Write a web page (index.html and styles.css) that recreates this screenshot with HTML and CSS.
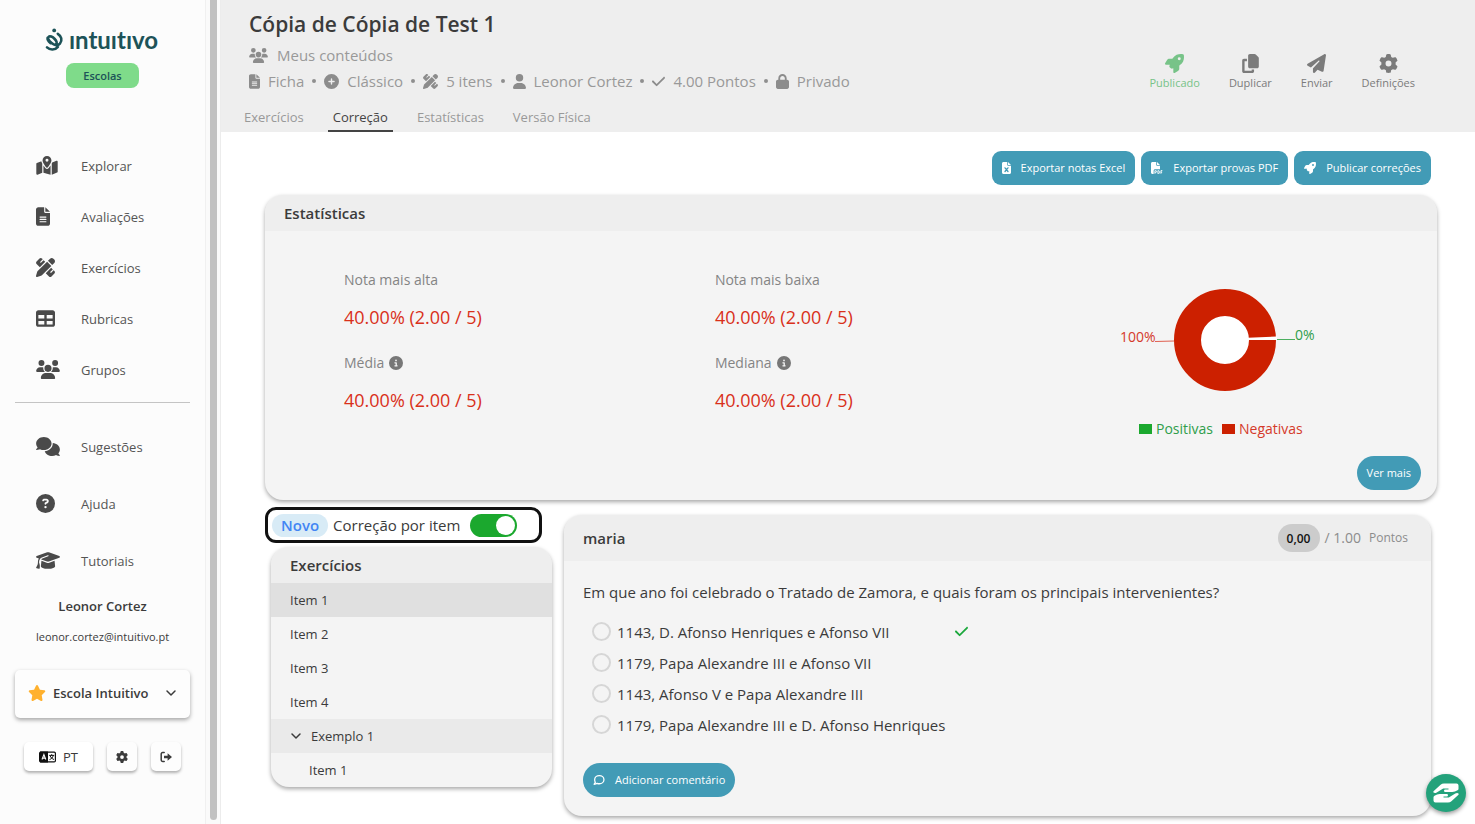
FILE: index.html
```html
<!DOCTYPE html>
<html lang="pt">
  <head>
    <meta charset="UTF-8" />
    <meta name="viewport" content="width=device-width, initial-scale=1.0" />
    <title>Cópia de Cópia de Test 1 - Intuitivo</title>
    <link rel="stylesheet" href="styles.css">
  </head>
  <body>
    <!-- Icon sprite -->
    <svg class="sprite" aria-hidden="true">
      <symbol id="i-map" viewBox="0 0 576 512"><path d="M408 120c0 54.6-73.1 151.9-105.2 192c-7.7 9.6-22 9.6-29.6 0C241.1 271.9 168 174.6 168 120C168 53.7 221.7 0 288 0s120 53.7 120 120zm8 80.4c3.5-6.9 6.7-13.8 9.6-20.6c.5-1.2 1-2.5 1.5-3.7l116-46.4C558.9 123.4 576 135 576 152V422.8c0 9.8-6 18.6-15.1 22.3L416 503V200.4zM137.6 138.3c2.4 14.1 7.2 28.3 12.8 41.5c2.9 6.8 6.1 13.7 9.6 20.6V451.8L32.9 502.7C17.1 509 0 497.4 0 480.4V209.6c0-9.8 6-18.6 15.1-22.3l122.6-49zM327.8 332c13.9-17.4 35.7-45.7 56.2-77V504.3L192 449.4V255c20.5 31.3 42.3 59.6 56.2 77c20.5 25.6 59.1 25.6 79.6 0zM288 152a40 40 0 1 0 0-80 40 40 0 1 0 0 80z"/></symbol>
      <symbol id="i-file" viewBox="0 0 384 512"><path d="M64 0C28.7 0 0 28.7 0 64V448c0 35.3 28.7 64 64 64H320c35.3 0 64-28.7 64-64V160H256c-17.7 0-32-14.3-32-32V0H64zM256 0V128H384L256 0zM112 256H272c8.8 0 16 7.2 16 16s-7.2 16-16 16H112c-8.8 0-16-7.2-16-16s7.2-16 16-16zm0 64H272c8.8 0 16 7.2 16 16s-7.2 16-16 16H112c-8.8 0-16-7.2-16-16s7.2-16 16-16zm0 64H272c8.8 0 16 7.2 16 16s-7.2 16-16 16H112c-8.8 0-16-7.2-16-16s7.2-16 16-16z"/></symbol>
      <symbol id="i-pen-ruler" viewBox="0 0 512 512"><path d="M469.3 19.3l23.4 23.4c25 25 25 65.5 0 90.5l-56.4 56.4L322.3 75.7l56.4-56.4c25-25 65.5-25 90.5 0zM44.9 353.2L299.7 98.3 413.7 212.3 158.8 467.1c-6.7 6.7-15.1 11.6-24.2 14.2l-104 29.7c-8.4 2.4-17.4 .1-23.6-6.1s-8.5-15.2-6.1-23.6l29.7-104c2.6-9.2 7.5-17.5 14.2-24.2zM249.4 103.4L103.4 249.4 16 161.9c-18.7-18.7-18.7-49.1 0-67.9L94.1 16c18.7-18.7 49.1-18.7 67.9 0l19.8 19.8c-.3 .3-.7 .6-1 .9l-64 64c-6.2 6.2-6.2 16.4 0 22.6s16.4 6.2 22.6 0l64-64c.3-.3 .6-.7 .9-1l45.1 45.1zM408.6 262.6l45.1 45.1c-.3 .3-.7 .6-1 .9l-64 64c-6.2 6.2-6.2 16.4 0 22.6s16.4 6.2 22.6 0l64-64c.3-.3 .6-.7 .9-1L496 350.1c18.7 18.7 18.7 49.1 0 67.9L417.9 496c-18.7 18.7-49.1 18.7-67.9 0l-87.4-87.4L408.6 262.6z"/></symbol>
      <symbol id="i-table" viewBox="0 0 512 512"><path d="M64 256V160H224v96H64zm0 64H224v96H64V320zm224 96V320H448v96H288zM448 256H288V160H448v96zM64 32C28.7 32 0 60.7 0 96V416c0 35.3 28.7 64 64 64H448c35.3 0 64-28.7 64-64V96c0-35.3-28.7-64-64-64H64z"/></symbol>
      <symbol id="i-users" viewBox="0 0 640 512"><path d="M144 0a80 80 0 1 1 0 160A80 80 0 1 1 144 0zM512 0a80 80 0 1 1 0 160A80 80 0 1 1 512 0zM0 298.7C0 239.8 47.8 192 106.7 192h42.7c15.9 0 31 3.5 44.6 9.7c-1.3 7.2-1.9 14.7-1.9 22.3c0 38.2 16.8 72.5 43.3 96c-.2 0-.4 0-.7 0H21.3C9.6 320 0 310.4 0 298.7zM405.3 320c-.2 0-.4 0-.7 0c26.6-23.5 43.3-57.8 43.3-96c0-7.6-.7-15-1.9-22.3c13.6-6.3 28.7-9.7 44.6-9.7h42.7C592.2 192 640 239.8 640 298.7c0 11.8-9.6 21.3-21.3 21.3H405.3zM224 224a96 96 0 1 1 192 0 96 96 0 1 1 -192 0zM128 485.3C128 411.7 187.7 352 261.3 352H378.7C452.3 352 512 411.7 512 485.3c0 14.7-11.9 26.7-26.7 26.7H154.7c-14.7 0-26.7-11.9-26.7-26.7z"/></symbol>
      <symbol id="i-comments" viewBox="0 0 640 512"><path d="M208 352c114.9 0 208-78.8 208-176S322.9 0 208 0S0 78.8 0 176c0 38.6 14.7 74.3 39.6 103.4c-3.5 9.4-8.7 17.7-14.2 24.7c-4.8 6.2-9.7 11-13.3 14.3c-1.8 1.6-3.3 2.9-4.3 3.7c-.5 .4-.9 .7-1.1 .8l-.2 .2C1 327.2-1.4 334.4 .8 340.9S9.1 352 16 352c21.8 0 43.8-5.6 62.1-12.5c9.2-3.5 17.8-7.4 25.2-11.4C134.1 343.3 169.8 352 208 352zM448 176c0 112.3-99.1 196.9-216.5 207C255.8 457.4 336.4 512 432 512c38.2 0 73.9-8.7 104.7-23.9c7.5 4 16 7.9 25.2 11.4c18.3 6.9 40.3 12.5 62.1 12.5c6.9 0 13.1-4.5 15.2-11.1c2.1-6.6-.2-13.8-5.8-17.9l-.2-.2c-.2-.2-.6-.4-1.1-.8c-1-.8-2.5-2-4.3-3.7c-3.6-3.3-8.5-8.1-13.3-14.3c-5.5-7-10.7-15.4-14.2-24.7c24.9-29 39.6-64.7 39.6-103.4c0-92.8-84.9-168.9-192.6-175.5c.4 5.1 .6 10.3 .6 15.5z"/></symbol>
      <symbol id="i-question" viewBox="0 0 512 512"><path d="M256 512A256 256 0 1 0 256 0a256 256 0 1 0 0 512zM169.8 165.3c7.9-22.3 29.1-37.3 52.8-37.3h58.3c34.9 0 63.1 28.3 63.1 63.1c0 22.6-12.1 43.5-31.7 54.8L280 264.4c-.2 13-10.9 23.6-24 23.6c-13.3 0-24-10.7-24-24V250.5c0-8.6 4.6-16.5 12.1-20.8l44.3-25.4c4.7-2.7 7.6-7.7 7.6-13.1c0-8.4-6.8-15.1-15.1-15.1H222.6c-3.4 0-6.4 2.1-7.5 5.3l-.4 1.2c-4.4 12.5-18.2 19-30.6 14.6s-19-18.2-14.6-30.6l.4-1.2zM224 352a32 32 0 1 1 64 0 32 32 0 1 1 -64 0z"/></symbol>
      <symbol id="i-cap" viewBox="0 0 640 512"><path d="M320 32c-8.1 0-16.1 1.4-23.7 4.1L15.8 137.4C6.3 140.9 0 149.9 0 160s6.3 19.1 15.8 22.6l57.9 20.9C57.3 229.3 48 259.8 48 291.9v28.1c0 28.4-10.8 57.7-22.3 80.8c-6.5 13-13.9 25.8-22.5 37.6C0 442.7-.9 448.3 .9 453.4s6 8.9 11.2 10.2l64 16c4.2 1.1 8.7 .3 12.4-2s6.3-6.1 7.1-10.4c8.6-42.8 4.3-81.2-2.1-108.7C90.3 344.3 86 329.8 80 316.5V291.9c0-30.2 10.2-58.7 27.9-81.5c12.9-15.5 29.6-28 49.2-35.7l157-61.7c8.2-3.2 17.5 .8 20.7 9s-.8 17.5-9 20.7l-157 61.7c-12.4 4.9-23.3 12.4-32.2 21.6l159.6 57.6c7.6 2.7 15.6 4.1 23.7 4.1s16.1-1.4 23.7-4.1L624.2 182.6c9.5-3.4 15.8-12.5 15.8-22.6s-6.3-19.1-15.8-22.6L343.7 36.1C336.1 33.4 328.1 32 320 32zM128 408c0 35.3 86 72 192 72s192-36.7 192-72L496.7 262.6 354.5 314c-11.1 4-22.8 6-34.5 6s-23.5-2-34.5-6L143.3 262.6 128 408z"/></symbol>
      <symbol id="i-star" viewBox="0 0 576 512"><path d="M316.9 18C311.6 7 300.4 0 288.1 0s-23.4 7-28.8 18L195 150.3 51.4 171.5c-12 1.8-22 10.2-25.7 21.7s-.7 24.2 7.9 32.7L137.8 329 113.2 474.7c-2 12 3 24.2 12.9 31.3s23 8 33.8 2.3l128.3-68.5 128.3 68.5c10.8 5.7 23.9 4.9 33.8-2.3s14.9-19.3 12.9-31.3L438.5 329 542.7 225.9c8.6-8.5 11.7-21.2 7.9-32.7s-13.7-19.9-25.7-21.7L381.2 150.3 316.9 18z"/></symbol>
      <symbol id="i-gear" viewBox="0 0 512 512"><path d="M495.9 166.6c3.2 8.7 .5 18.4-6.4 24.6l-43.3 39.4c1.1 8.3 1.7 16.8 1.7 25.4s-.6 17.1-1.7 25.4l43.3 39.4c6.9 6.2 9.6 15.9 6.4 24.6c-4.4 11.9-9.7 23.3-15.8 34.3l-4.7 8.1c-6.6 11-14 21.4-22.1 31.2c-5.9 7.2-15.7 9.6-24.5 6.8l-55.7-17.7c-13.4 10.3-28.2 18.9-44 25.4l-12.5 57.1c-2 9.1-9 16.3-18.2 17.8c-13.8 2.3-28 3.5-42.5 3.5s-28.7-1.2-42.5-3.5c-9.2-1.5-16.2-8.7-18.2-17.8l-12.5-57.1c-15.8-6.5-30.6-15.1-44-25.4L83.1 425.9c-8.8 2.8-18.6 .3-24.5-6.8c-8.1-9.8-15.5-20.2-22.1-31.2l-4.7-8.1c-6.1-11-11.4-22.4-15.8-34.3c-3.2-8.7-.5-18.4 6.4-24.6l43.3-39.4C64.6 273.1 64 264.6 64 256s.6-17.1 1.7-25.4L22.4 191.2c-6.9-6.2-9.6-15.9-6.4-24.6c4.4-11.9 9.7-23.3 15.8-34.3l4.7-8.1c6.6-11 14-21.4 22.1-31.2c5.9-7.2 15.7-9.6 24.5-6.8l55.7 17.7c13.4-10.3 28.2-18.9 44-25.4l12.5-57.1c2-9.1 9-16.3 18.2-17.8C227.3 1.2 241.5 0 256 0s28.7 1.2 42.5 3.5c9.2 1.5 16.2 8.7 18.2 17.8l12.5 57.1c15.8 6.5 30.6 15.1 44 25.4l55.7-17.7c8.8-2.8 18.6-.3 24.5 6.8c8.1 9.8 15.5 20.2 22.1 31.2l4.7 8.1c6.1 11 11.4 22.4 15.8 34.3zM256 336a80 80 0 1 0 0-160 80 80 0 1 0 0 160z"/></symbol>
      <symbol id="i-plus" viewBox="0 0 512 512"><path d="M256 512A256 256 0 1 0 256 0a256 256 0 1 0 0 512zM232 344V280H168c-13.3 0-24-10.7-24-24s10.7-24 24-24h64V168c0-13.3 10.7-24 24-24s24 10.7 24 24v64h64c13.3 0 24 10.7 24 24s-10.7 24-24 24H280v64c0 13.3-10.7 24-24 24s-24-10.7-24-24z"/></symbol>
      <symbol id="i-user" viewBox="0 0 448 512"><path d="M224 256A128 128 0 1 0 224 0a128 128 0 1 0 0 256zm-45.7 48C79.8 304 0 383.8 0 482.3C0 498.7 13.3 512 29.7 512H418.3c16.4 0 29.7-13.3 29.7-29.7C448 383.8 368.2 304 269.7 304H178.3z"/></symbol>
      <symbol id="i-check" viewBox="0 0 448 512"><path d="M438.6 105.4c12.5 12.5 12.5 32.8 0 45.3l-256 256c-12.5 12.5-32.8 12.5-45.3 0l-128-128c-12.5-12.5-12.5-32.8 0-45.3s32.8-12.5 45.3 0L160 338.7 393.4 105.4c12.5-12.5 32.8-12.5 45.3 0z"/></symbol>
      <symbol id="i-lock" viewBox="0 0 448 512"><path d="M144 144v48H304V144c0-44.2-35.8-80-80-80s-80 35.8-80 80zM80 192V144C80 64.5 144.5 0 224 0s144 64.5 144 144v48h16c35.3 0 64 28.7 64 64V448c0 35.3-28.7 64-64 64H64c-35.3 0-64-28.7-64-64V256c0-35.3 28.7-64 64-64H80z"/></symbol>
      <symbol id="i-rocket" viewBox="0 0 512 512"><path d="M156.6 384.9L125.7 354c-8.5-8.5-11.5-20.8-7.7-32.2c3-8.900 7-20.500 11.800-33.800L24 288c-8.600 0-16.600-4.600-20.900-12.100s-4.200-16.700 .2-24.100l52.500-88.500c13-21.900 36.500-35.300 61.900-35.300l82.300 0c2.400-4 4.800-7.700 7.200-11.300C289.100-4.100 411.100-8.100 483.900 5.300c11.600 2.100 20.600 11.200 22.800 22.800c13.400 72.900 9.300 194.800-111.400 276.700c-3.500 2.400-7.300 4.800-11.300 7.200v82.300c0 25.400-13.400 49-35.300 61.900l-88.500 52.500c-7.400 4.400-16.600 4.500-24.100 .2s-12.100-12.200-12.100-20.900V380.800c-14.100 4.900-26.400 8.900-35.700 11.900c-11.200 3.600-23.400 .5-31.800-7.800zM384 168a40 40 0 1 0 0-80 40 40 0 1 0 0 80z"/></symbol>
      <symbol id="i-copy" viewBox="0 0 448 512"><path d="M208 0H332.1c12.7 0 24.9 5.1 33.9 14.1l67.9 67.9c9 9 14.1 21.2 14.1 33.9V336c0 26.5-21.5 48-48 48H208c-26.5 0-48-21.5-48-48V48c0-26.5 21.5-48 48-48zM48 128h80v64H64V448H256V416h64v48c0 26.5-21.5 48-48 48H48c-26.5 0-48-21.5-48-48V176c0-26.5 21.5-48 48-48z"/></symbol>
      <symbol id="i-plane" viewBox="0 0 512 512"><path d="M498.1 5.6c10.1 7 15.4 19.1 13.5 31.2l-64 416c-1.5 9.7-7.4 18.2-16 23s-18.9 5.4-28 1.6L284 427.7l-68.5 74.1c-8.9 9.7-22.9 12.9-35.2 8.1S160 493.2 160 480V396.4c0-4 1.5-7.8 4.2-10.7L331.8 202.8c5.8-6.3 5.6-16-.4-22s-15.7-6.4-22-.7L106 360.8 17.7 316.6C7.1 311.3 .3 300.7 0 288.9s5.9-22.8 16.1-28.7l448-256c10.7-6.1 23.9-5.5 34 1.4z"/></symbol>
      <symbol id="i-info" viewBox="0 0 512 512"><path d="M256 512A256 256 0 1 0 256 0a256 256 0 1 0 0 512zM216 336h24V272H216c-13.3 0-24-10.7-24-24s10.7-24 24-24h48c13.3 0 24 10.7 24 24v88h8c13.3 0 24 10.7 24 24s-10.7 24-24 24H216c-13.3 0-24-10.7-24-24s10.7-24 24-24zm40-208a32 32 0 1 1 0 64 32 32 0 1 1 0-64z"/></symbol>
      <symbol id="i-excel" viewBox="0 0 384 512"><path d="M64 0C28.7 0 0 28.7 0 64V448c0 35.3 28.7 64 64 64H320c35.3 0 64-28.7 64-64V160H256c-17.7 0-32-14.3-32-32V0H64zM256 0V128H384L256 0z"/><path d="M128 250l128 156M256 250L128 406" fill="none" stroke="#429bb6" stroke-width="56" stroke-linecap="round"/></symbol>
      <symbol id="i-pdf" viewBox="0 0 512 512"><path d="M0 64C0 28.7 28.7 0 64 0H224V128c0 17.7 14.3 32 32 32H384V304H176c-35.3 0-64 28.7-64 64V512H64c-35.3 0-64-28.7-64-64V64zm384 64H256V0L384 128z"/><path d="M168 500v-132h32a36 36 0 0 1 0 76h-32M296 368h24c22 0 36 16 36 38v56c0 22-14 38-36 38h-24zM424 500v-132h60M424 436h50" fill="none" stroke="currentColor" stroke-width="40"/></symbol>
      <symbol id="i-comment" viewBox="0 0 16 16"><path d="M8.400 2.200c3.500 0 6.200 2.400 6.200 5.400s-2.700 5.400-6.200 5.400c-1 0-2-.2-2.900-.6-1 .8-2.400 1.300-4 1.300.8-.8 1.400-1.700 1.600-2.700C2.500 10 2.200 8.800 2.200 7.600c0-3 2.700-5.400 6.200-5.400z" fill="none" stroke="currentColor" stroke-width="1.700" stroke-linejoin="round"/></symbol>
      <symbol id="i-chevron" viewBox="0 0 12 12"><path d="M2 4l4 4 4-4" fill="none" stroke="currentColor" stroke-width="1.500" stroke-linecap="round" stroke-linejoin="round"/></symbol>
      <symbol id="i-logout" viewBox="0 0 12 12"><path d="M4.200 1.500H2.600A1.400 1.400 0 0 0 1.200 2.900v6.200a1.400 1.400 0 0 0 1.400 1.400h1.600" fill="none" stroke="currentColor" stroke-width="1.500" stroke-linecap="round"/><path d="M7.600 2.300L12 6 7.600 9.700V7.200H4V4.800h3.600z"/></symbol>
      <symbol id="i-language" viewBox="0 0 17 12"><rect x=".6" y="1.100" width="15.800" height="9.800" rx="1.200" fill="#fff" stroke="currentColor" stroke-width="1.200"/><path d="M1 .5h8v11H1z"/><path d="M3 8.500L4.900 3.600l1.900 4.900M3.600 7.100h2.600" fill="none" stroke="#fff" stroke-width="1.100"/><path d="M10.200 4.400h5M12.700 3.200v1.200M14.200 4.600c-.4 1.800-1.800 3.300-3.700 4M11.200 5c.7 1.600 1.900 2.800 3.800 3.500" fill="none" stroke="currentColor" stroke-width="1"/></symbol>
      <symbol id="i-hands" viewBox="0 0 28 22"><path d="M1.500 9.200L8.600 2.800Q10 1.500 12 1.500h12.500a2 2 0 0 1 2 2v3.200q0 1-1 1.500-2.600 1.800-5.200 1.800h-7.100a1.200 1.200 0 0 1 0-2.400h3.300V6.500h-5.300L4.700 10.400C2.800 11.600.6 10.600 1.500 9.200z"/><path d="M26.500 12.800l-7.100 6.400Q18 20.500 16 20.500H3.500a2 2 0 0 1-2-2v-3.200q0-1 1-1.500 2.600-1.800 5.200-1.800h7.100a1.200 1.200 0 0 1 0 2.400h-3.300v1.100h5.300l6.500-3.900c1.900-1.200 4.100-.2 3.200 1.200z"/></symbol>
    </svg>

    <div class="app">
      <aside class="sidebar">
        <a class="logo" href="#" aria-label="Intuitivo">
          <svg class="logo-mark" viewBox="0 0 20 26">
            <circle cx="9.200" cy="3.400" r="1.900" />
            <path d="M12.800 6.800c3.600 2.200 4.900 6.500 2.100 9.900-2 2.300-5.800 1.600-8.300-.6-2.600-2.200-4.400-4.700-3.100-6.100 1.300-1.500 4.100-.3 6.200 2 2 2.200 2.600 4.300 1.500 5.200M5.600 16.200c-1.500-1.200-3.400-3.700-3-5.400M2 20.400c3 2.900 7.900 2.900 10.900-.6" />
          </svg>
          <span class="logo-name">ıntuıtıvo</span>
        </a>
        <span class="plan">Escolas</span>

        <nav class="menu">
          <a href="#"><svg class="w22"><use href="#i-map"/></svg>Explorar</a>
          <a href="#"><svg class="w14"><use href="#i-file"/></svg>Avaliações</a>
          <a href="#"><svg class="w19"><use href="#i-pen-ruler"/></svg>Exercícios</a>
          <a href="#"><svg class="w19"><use href="#i-table"/></svg>Rubricas</a>
          <a href="#"><svg class="w24"><use href="#i-users"/></svg>Grupos</a>
        </nav>
        <hr>
        <nav class="menu menu-help">
          <a href="#"><svg class="w24"><use href="#i-comments"/></svg>Sugestões</a>
          <a href="#"><svg class="w19"><use href="#i-question"/></svg>Ajuda</a>
          <a href="#"><svg class="w24"><use href="#i-cap"/></svg>Tutoriais</a>
        </nav>

        <p class="user-name">Leonor Cortez</p>
        <p class="user-email">leonor.cortez@intuitivo.pt</p>

        <label class="school">
          <svg class="star"><use href="#i-star"/></svg>
          <select aria-label="Escola">
            <option>Escola Intuitivo</option>
          </select>
          <svg class="chevron"><use href="#i-chevron"/></svg>
        </label>

        <div class="tools">
          <button class="tool tool-lang"><svg><use href="#i-language"/></svg>PT</button>
          <button class="tool" aria-label="Definições da conta"><svg><use href="#i-gear"/></svg></button>
          <button class="tool" aria-label="Sair"><svg><use href="#i-logout"/></svg></button>
        </div>
      </aside>
      <div class="scrollbar"><div class="thumb"></div></div>

      <main>
        <header>
          <div class="heading">
            <h1>Cópia de Cópia de Test 1</h1>
            <p class="folder"><svg><use href="#i-users"/></svg>Meus conteúdos</p>
            <ul class="meta">
              <li><svg class="w11"><use href="#i-file"/></svg>Ficha</li>
              <li><svg class="w15"><use href="#i-plus"/></svg>Clássico</li>
              <li><svg class="w15"><use href="#i-pen-ruler"/></svg>5 itens</li>
              <li><svg class="w13"><use href="#i-user"/></svg>Leonor Cortez</li>
              <li><svg class="w13"><use href="#i-check"/></svg>4.00 Pontos</li>
              <li><svg class="w13"><use href="#i-lock"/></svg>Privado</li>
            </ul>
            <nav class="tabs">
              <a href="#">Exercícios</a>
              <a href="#" class="active">Correção</a>
              <a href="#">Estatísticas</a>
              <a href="#">Versão Física</a>
            </nav>
          </div>
          <div class="actions">
            <button class="published"><svg><use href="#i-rocket"/></svg>Publicado</button>
            <button><svg><use href="#i-copy"/></svg>Duplicar</button>
            <button><svg><use href="#i-plane"/></svg>Enviar</button>
            <button><svg><use href="#i-gear"/></svg>Definições</button>
          </div>
        </header>

        <div class="content">
          <div class="exports">
            <button class="btn"><svg class="w9"><use href="#i-excel"/></svg>Exportar notas Excel</button>
            <button class="btn"><svg class="w12"><use href="#i-pdf"/></svg>Exportar provas PDF</button>
            <button class="btn"><svg class="w12"><use href="#i-rocket"/></svg>Publicar correções</button>
          </div>

          <section class="card stats">
            <h2>Estatísticas</h2>
            <div class="stats-body">
              <dl>
                <dt>Nota mais alta</dt>
                <dd>40.00% (2.00 / 5)</dd>
                <dt>Média <svg><use href="#i-info"/></svg></dt>
                <dd>40.00% (2.00 / 5)</dd>
              </dl>
              <dl>
                <dt>Nota mais baixa</dt>
                <dd>40.00% (2.00 / 5)</dd>
                <dt>Mediana <svg><use href="#i-info"/></svg></dt>
                <dd>40.00% (2.00 / 5)</dd>
              </dl>
              <div class="chart">
                <svg class="donut" viewBox="0 0 210 120" role="img" aria-label="100% negativas, 0% positivas">
                  <circle cx="105" cy="60" r="24" fill="#fff" />
                  <circle cx="105" cy="60" r="37.500" fill="none" stroke="#cc2000" stroke-width="27" />
                  <path d="M128 57.800l29-1.300v3.500h-29z" fill="#fff" />
                  <path d="M35 61.500l19-.5" stroke="#e06050" />
                  <path d="M157 59.500h18" stroke="#4caf60" />
                  <text class="neg" x="0" y="62">100%</text>
                  <text class="pos" x="175" y="60">0%</text>
                </svg>
                <ul class="legend">
                  <li class="pos">Positivas</li>
                  <li class="neg">Negativas</li>
                </ul>
              </div>
            </div>
            <div class="stats-footer">
              <button class="btn btn-pill">Ver mais</button>
            </div>
          </section>

          <div class="correction">
            <div class="side">
              <label class="by-item">
                <span class="new">Novo</span>
                Correção por item
                <input type="checkbox" checked>
              </label>

              <section class="card exercises">
                <h2>Exercícios</h2>
                <a href="#" class="selected">Item 1</a>
                <a href="#">Item 2</a>
                <a href="#">Item 3</a>
                <a href="#">Item 4</a>
                <a href="#" class="group"><svg><use href="#i-chevron"/></svg>Exemplo 1</a>
                <a href="#" class="child">Item 1</a>
              </section>
            </div>

            <section class="card question">
              <div class="question-header">
                <h2>maria</h2>
                <div class="score">
                  <input type="text" value="0,00" aria-label="Pontos obtidos">
                  <span class="max">/ 1.00</span>
                  <span class="unit">Pontos</span>
                </div>
              </div>
              <div class="question-body">
                <p>Em que ano foi celebrado o Tratado de Zamora, e quais foram os principais intervenientes?</p>
                <div class="options">
                  <label><input type="radio" name="answer">1143, D. Afonso Henriques e Afonso VII <svg><use href="#i-check"/></svg></label>
                  <label><input type="radio" name="answer">1179, Papa Alexandre III e Afonso VII</label>
                  <label><input type="radio" name="answer">1143, Afonso V e Papa Alexandre III</label>
                  <label><input type="radio" name="answer">1179, Papa Alexandre III e D. Afonso Henriques</label>
                </div>
                <button class="btn btn-pill"><svg class="w12"><use href="#i-comment"/></svg>Adicionar comentário</button>
              </div>
            </section>
          </div>
        </div>
      </main>
    </div>

    <button class="support" aria-label="Suporte"><svg><use href="#i-hands"/></svg></button>
  </body>
</html>
```
FILE: styles.css
```css
* {
  box-sizing: border-box;
}

body {
  margin: 0;
  font-family: "Open Sans", "Noto Sans", sans-serif;
  font-size: 13px;
  line-height: 20px;
  color: #3b3b3b;
  background: #fff;
}

h1, h2, p, ul, dl, dd {
  margin: 0;
  padding: 0;
}

ul {
  list-style: none;
}

a {
  color: inherit;
  text-decoration: none;
}

button, input, select {
  font: inherit;
  color: inherit;
}

button {
  border: none;
  padding: 0;
  background: none;
  cursor: pointer;
}

svg {
  fill: currentColor;
  flex: none;
}

.sprite {
  display: none;
}

.w9 { width: 9px; }
.w11 { width: 11px; }
.w12 { width: 12px; }
.w13 { width: 13px; }
.w14 { width: 14px; }
.w15 { width: 15px; }
.w19 { width: 19px; }
.w22 { width: 22px; }
.w24 { width: 24px; }

.app {
  display: flex;
  min-height: 100vh;
}

/* Sidebar */
.sidebar {
  width: 205px;
  flex: none;
  display: flex;
  flex-direction: column;
  padding: 27px 15px 0;
  background: #fcfcfc;
}

.logo {
  display: flex;
  justify-content: center;
  align-items: center;
  gap: 4px;
  height: 26px;
  color: #1d5358;
  padding-right: 2px;
}

.logo-mark {
  width: 20px;
  height: 26px;
}

.logo-mark path {
  fill: none;
  stroke: currentColor;
  stroke-width: 2.6;
  stroke-linecap: round;
}

.logo-name {
  font-family: Lato, sans-serif;
  font-weight: 700;
  font-size: 24px;
  line-height: 26px;
  font-variant-ligatures: none;
}

.plan {
  align-self: center;
  margin-top: 10px;
  padding: 0 17px;
  border-radius: 8px;
  background: #7fdb8a;
  color: #1d5358;
  font-size: 11px;
  line-height: 25px;
  font-weight: 600;
}

.menu {
  margin-top: 52px;
  color: #555;
}

.menu a {
  display: grid;
  grid-template-columns: 45px 1fr;
  align-items: center;
  height: 51px;
  padding-left: 21px;
}

.menu svg {
  height: 19px;
  color: #4a4a4a;
}

.sidebar hr {
  width: 100%;
  margin: 7px 0 15px;
  border: none;
  border-top: 1px solid #c4c4c4;
}

.menu-help {
  margin-top: 0;
}

.menu-help a {
  height: 57px;
}

.user-name {
  margin-top: 7px;
  text-align: center;
  font-weight: 600;
}

.user-email {
  margin-top: 11px;
  text-align: center;
  font-size: 11px;
}

.school {
  display: flex;
  align-items: center;
  height: 48px;
  margin-top: 23px;
  padding: 0 13px 2px 13px;
  border-radius: 5px;
  background: #fdfdfd;
  box-shadow: 0 2px 4px rgba(0, 0, 0, 0.35);
}

.school select {
  flex: 1;
  min-width: 0;
  margin-left: 7px;
  border: none;
  background: none;
  appearance: none;
  font-weight: 600;
}

.school .star {
  width: 18px;
  height: 16px;
  color: #ffb12e;
}

.school .chevron {
  width: 12px;
  height: 12px;
}

.tools {
  display: flex;
  gap: 14px;
  margin-top: 24px;
  padding: 0 9px;
}

.tool {
  display: flex;
  justify-content: center;
  align-items: center;
  width: 30px;
  height: 29px;
  border-radius: 5px;
  background: #fdfdfd;
  box-shadow: 0 2px 3px rgba(0, 0, 0, 0.3);
}

.tool svg {
  width: 12px;
  height: 12px;
}

.tool-lang {
  width: 69px;
  gap: 7px;
  background: #fff;
}

.tool-lang svg {
  width: 17px;
  color: #111;
}

.scrollbar {
  width: 16px;
  flex: none;
  padding: 0 3px 4px 4px;
  border-left: 1px solid #f0f0f0;
  border-right: 1px solid #ececec;
  background: #fafafa;
}

.thumb {
  height: 100%;
  border-radius: 0 0 4px 4px;
  background: #c1c1c1;
}

/* Page header */
main {
  flex: 1;
  min-width: 0;
}

header {
  display: flex;
  justify-content: space-between;
  padding: 9px 60px 0 28px;
  background: #eee;
  color: #999;
}

header svg {
  color: #8c8c8c;
}

h1 {
  font-size: 21px;
  line-height: 30px;
  font-weight: 600;
  color: #3b3b3b;
}

.folder {
  display: flex;
  align-items: center;
  gap: 9px;
  margin-top: 4px;
  font-size: 15px;
  line-height: 24px;
}

.folder svg {
  width: 19px;
  height: 15px;
}

.meta {
  display: flex;
  font-size: 15px;
  line-height: 28px;
}

.meta li {
  display: flex;
  align-items: center;
  gap: 8px;
}

.meta svg {
  height: 15px;
}

.meta li + li::before {
  content: "";
  width: 4px;
  height: 4px;
  margin-left: 8px;
  border-radius: 50%;
  background: #8f8f8f;
}

.tabs {
  display: flex;
  gap: 19px;
  margin: 11px 0 0 -10px;
}

.tabs a {
  padding: 0 5px 2px;
  line-height: 22px;
  border-bottom: 2px solid transparent;
}

.tabs .active {
  color: #444;
  border-color: #444;
}

.actions {
  display: flex;
  align-items: flex-start;
  gap: 29px;
  padding-top: 45px;
}

.actions button {
  display: flex;
  flex-direction: column;
  align-items: center;
  font-size: 11px;
  color: #7b7b7b;
}

.actions svg {
  width: 19px;
  height: 19px;
  color: inherit;
}

.actions .published {
  color: #77c388;
}

/* Content */
.content {
  padding: 19px 38px 7px 44px;
}

.exports {
  display: flex;
  justify-content: flex-end;
  gap: 6px;
  margin: 0 6px 10px 0;
}

.btn {
  display: flex;
  align-items: center;
  gap: 10px;
  height: 34px;
  padding: 0 10px;
  border-radius: 9px;
  background: #429bb6;
  color: #fff;
  font-size: 11px;
}

.btn svg {
  height: 12px;
}

.btn-pill {
  border-radius: 17px;
}

.card {
  border-radius: 18px;
  overflow: hidden;
  background: #f4f4f4;
  box-shadow: 0 2px 4px rgba(0, 0, 0, 0.35);
}

.card h2 {
  font-size: 15px;
  line-height: 36px;
  font-weight: 600;
}

.stats h2,
.exercises h2 {
  padding: 0 19px;
  background: #eee;
}

.stats-body {
  display: grid;
  grid-template-columns: 4fr 4fr 3fr;
  padding: 38px 73px 0 79px;
}

.stats dt {
  display: flex;
  align-items: center;
  gap: 5px;
  font-size: 14px;
  line-height: 22px;
  color: #848484;
}

.stats dt svg {
  width: 14px;
  height: 14px;
  color: #777;
}

.stats dd {
  margin: 12px 0 21px;
  font-size: 18px;
  line-height: 28px;
  color: #d9301a;
}

.chart {
  display: flex;
  flex-direction: column;
  align-items: center;
  padding-top: 11px;
  font-size: 14px;
}

.donut {
  width: 210px;
  height: 120px;
}

.pos {
  color: #2f9e4b;
  fill: #2f9e4b;
}

.neg {
  color: #d43a2a;
  fill: #d43a2a;
}

.legend {
  display: flex;
  gap: 9px;
  margin: 18px 8px 0 0;
  line-height: 22px;
}

.legend li {
  display: flex;
  align-items: center;
  gap: 4px;
}

.legend li::before {
  content: "";
  width: 13px;
  height: 10px;
  background: #1ba82e;
}

.legend .neg::before {
  background: #cc2000;
}

.stats-footer {
  display: flex;
  justify-content: flex-end;
  padding: 16px 16px 10px;
}

.correction {
  display: grid;
  grid-template-columns: 1fr 3fr;
  align-items: start;
  gap: 10px;
  margin: 7px 6px 0 0;
}

.by-item {
  display: flex;
  align-items: center;
  gap: 5px;
  height: 36px;
  margin-right: 12px;
  padding: 0 4px;
  border: 3px solid #111;
  border-radius: 11px;
  font-size: 15px;
}

.new {
  padding: 0 9px;
  border-radius: 12px;
  background: #d8ebf6;
  color: #4285f4;
  font-weight: 600;
  line-height: 23px;
}

.by-item input {
  width: 47px;
  height: 23px;
  margin: 0 0 0 5px;
  padding: 2px;
  border-radius: 12px;
  background: #1ba82e;
  appearance: none;
  display: flex;
  justify-content: flex-end;
}

.by-item input::before {
  content: "";
  width: 19px;
  height: 19px;
  border-radius: 50%;
  background: #fff;
}

.exercises {
  margin: 4px 2px 0 6px;
}

.exercises a {
  display: flex;
  align-items: center;
  height: 34px;
  padding: 0 19px;
}

.exercises .selected {
  background: #e0e0e0;
}

.exercises .group {
  gap: 9px;
  background: #eaeaea;
}

.exercises .group svg {
  width: 12px;
  height: 12px;
}

.exercises .child {
  padding-left: 38px;
}

.question {
  margin-top: 8px;
}

.question-header {
  display: flex;
  justify-content: space-between;
  align-items: center;
  height: 46px;
  padding: 0 23px 0 19px;
  background: #eee;
}

.score {
  display: flex;
  align-items: center;
  color: #8c8c8c;
}

.score input {
  width: 42px;
  height: 28px;
  padding: 0;
  border: none;
  border-radius: 14px;
  background: #ccc;
  color: #111;
  font-size: 12px;
  font-weight: 600;
  text-align: center;
}

.score .max {
  margin: 0 8px 0 5px;
  font-size: 14px;
}

.score .unit {
  font-size: 12px;
}

.question-body {
  padding: 19px;
}

.question-body p {
  font-size: 15px;
  line-height: 24px;
}

.options {
  margin: 12px 0 23px;
}

.options label {
  display: flex;
  align-items: center;
  height: 31px;
  padding-left: 9px;
  font-size: 15px;
}

.options input {
  width: 19px;
  height: 19px;
  margin: 0 6px 0 0;
  border: 2px solid #d6d6d6;
  border-radius: 50%;
  appearance: none;
}

.options svg {
  width: 13px;
  height: 15px;
  margin-left: 65px;
  color: #1ba83c;
}

.support {
  position: fixed;
  right: 9px;
  bottom: 12px;
  display: flex;
  justify-content: center;
  align-items: center;
  width: 40px;
  height: 38px;
  border-radius: 50%;
  background: #23a27b;
  color: #fff;
  box-shadow: 0 2px 4px rgba(0, 0, 0, 0.4);
}

.support svg {
  width: 28px;
  height: 22px;
}
```
